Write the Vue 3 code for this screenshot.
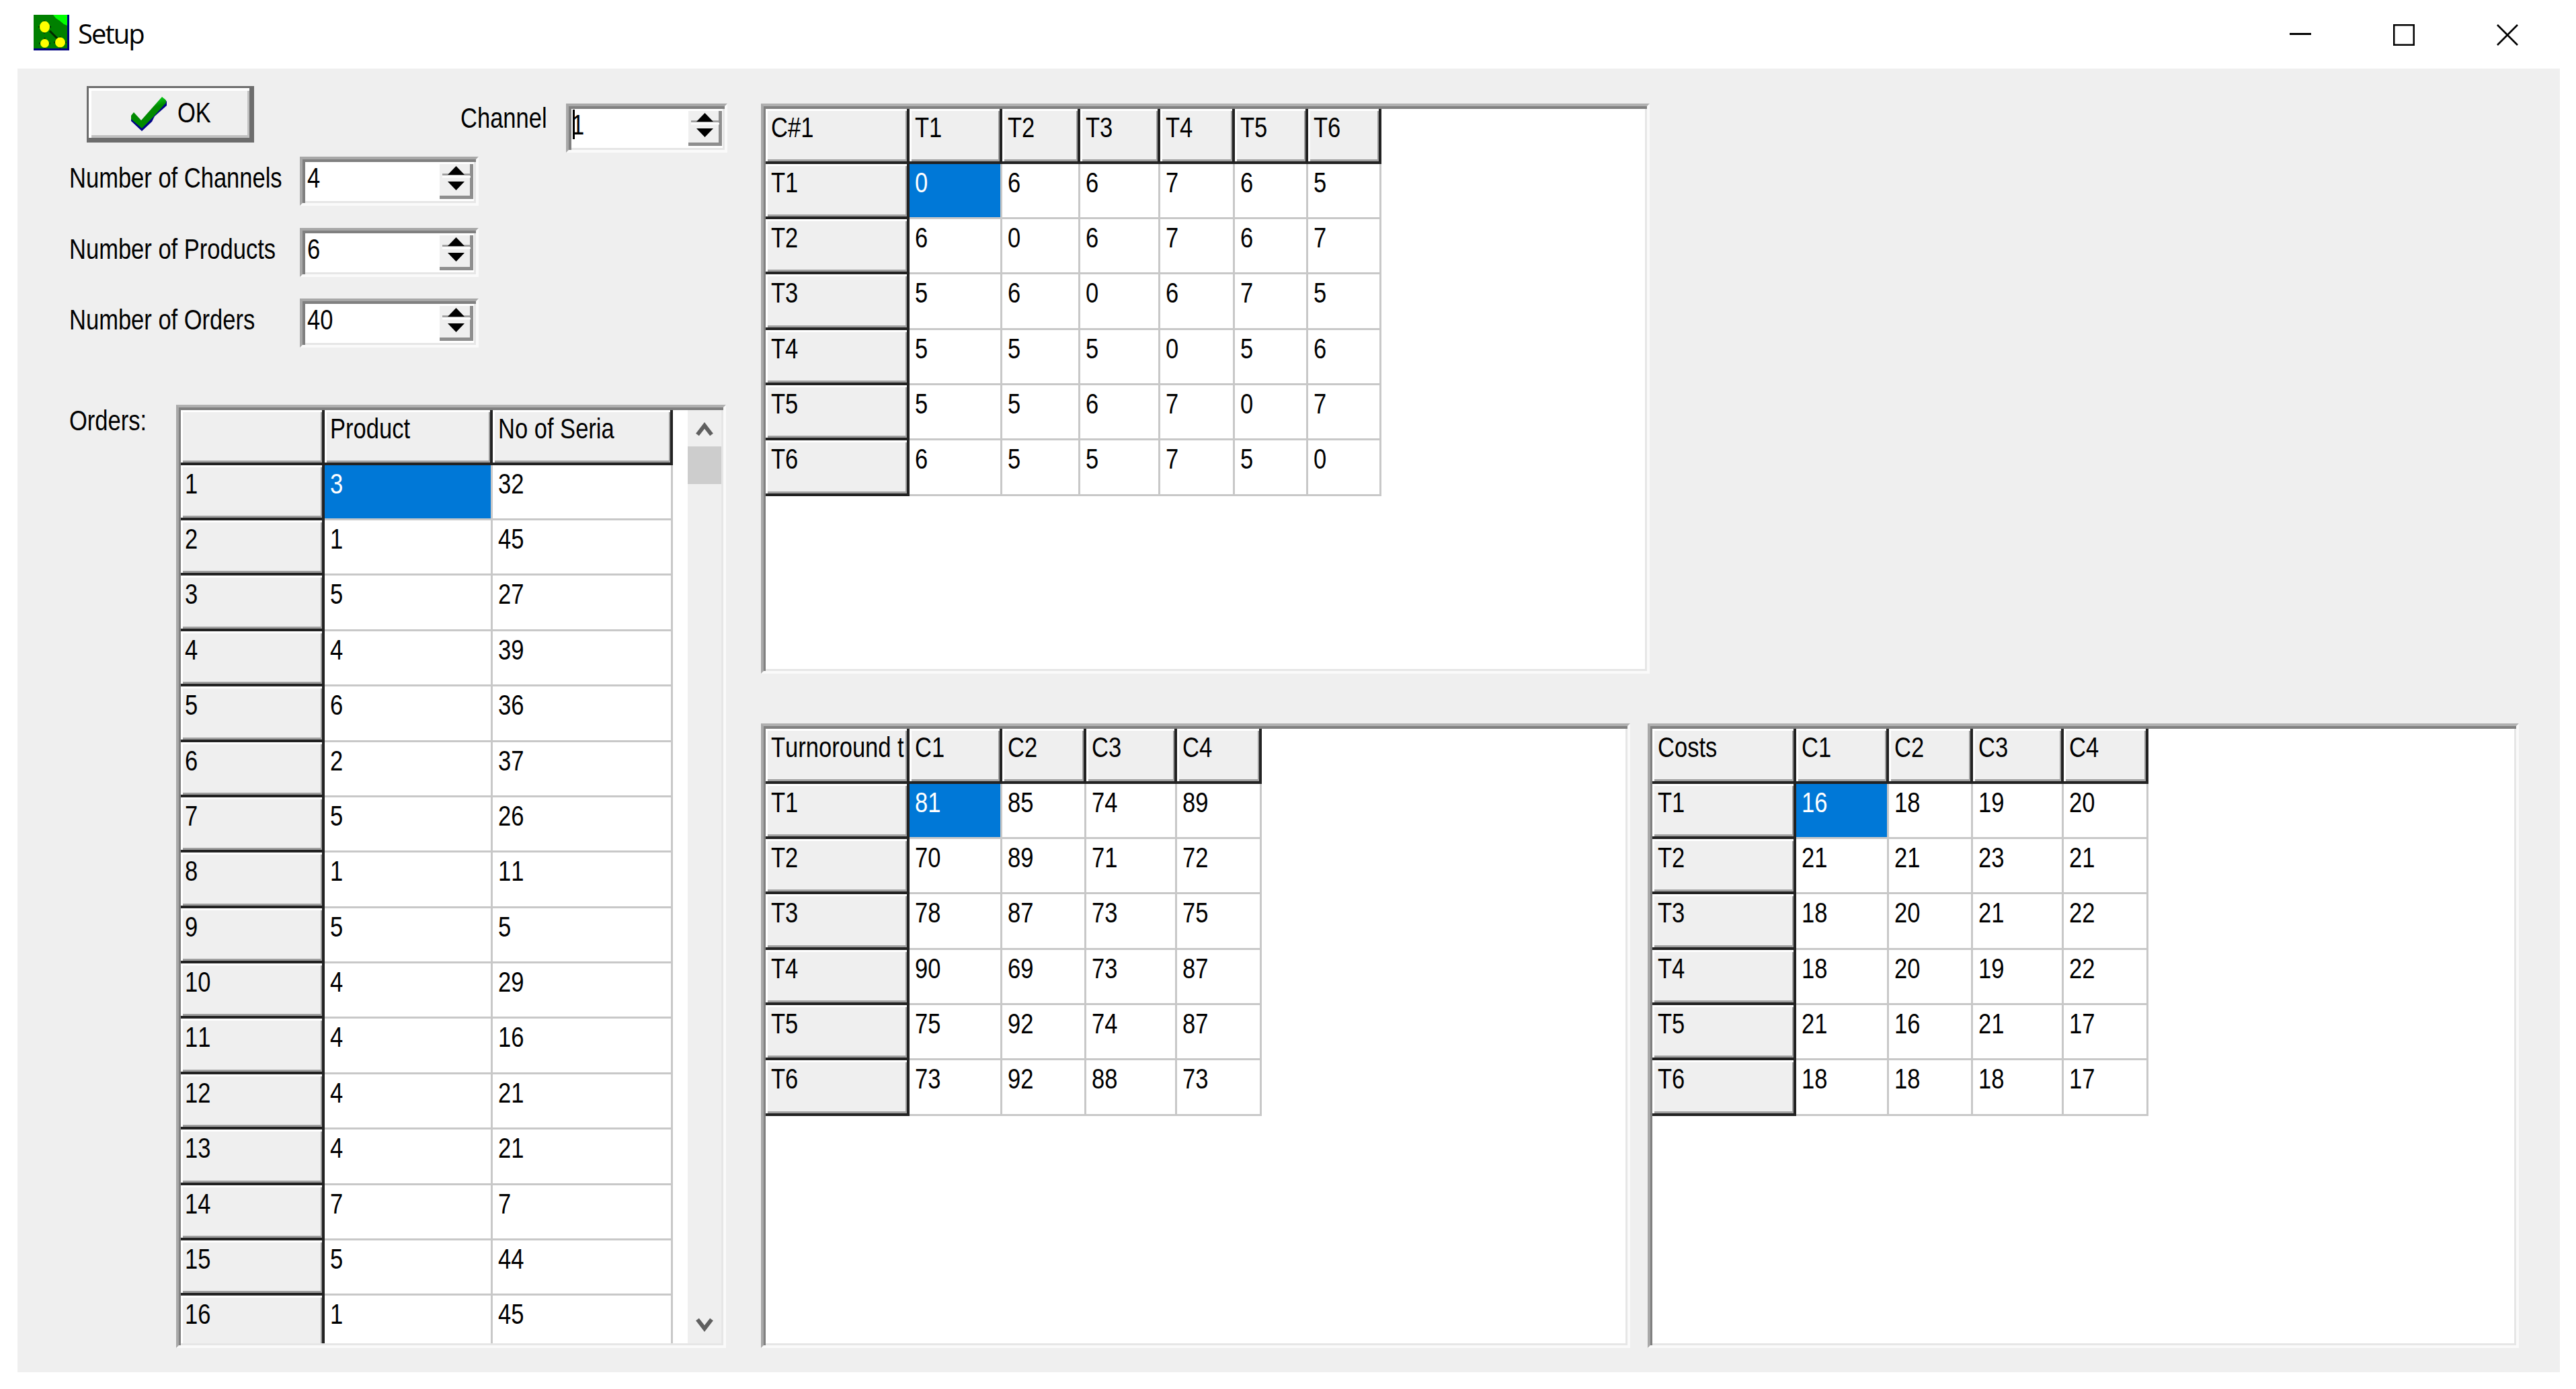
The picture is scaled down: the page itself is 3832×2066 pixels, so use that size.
<template>
  <div class="window">
    <header class="titlebar">
      <svg class="app-icon" viewBox="0 0 53 53">
        <rect width="53" height="53" fill="#000080" />
        <rect width="50" height="50" fill="#008000" />
        <path d="M29 0H50V16L45 14L39 9L33 5Z" fill="#00ff00" />
        <path d="M24 24L36 36" stroke="#002800" stroke-width="3" fill="none" />
        <path d="M16 8V28M7 18H26M16.500 34V50M8 42.500H25M39.500 32V50M30 41H49" stroke="#003c00" stroke-width="2.500" fill="none" />
        <ellipse cx="16.500" cy="18" rx="7.500" ry="8.500" fill="#ffff00" />
        <ellipse cx="16.500" cy="42.500" rx="6.500" ry="6.500" fill="#ffff00" />
        <ellipse cx="39.500" cy="41" rx="7.500" ry="7.500" fill="#ffff00" />
      </svg>
      <span class="title">Setup</span>
      <div class="window-buttons">
        <svg viewBox="0 0 32 32"><path d="M0 14.5H32" stroke="#000" stroke-width="3" /></svg>
        <svg viewBox="0 0 32 32"><rect x="1.25" y="1.25" width="29.5" height="29.5" fill="none" stroke="#000" stroke-width="2.5" /></svg>
        <svg viewBox="0 0 32 32"><path d="M1 1L31 31M31 1L1 31" stroke="#000" stroke-width="2.6" /></svg>
      </div>
    </header>

    <main class="client">
      <section class="left">
        <div class="top-row">
          <button class="ok">
            <svg class="check" viewBox="0 0 54 52">
              <defs>
                <linearGradient id="tick" x1="0" y1="0" x2="0.35" y2="1">
                  <stop offset="0.15" stop-color="#10f028" />
                  <stop offset="0.5" stop-color="#008a00" />
                </linearGradient>
              </defs>
              <path d="M1 31L1 36L17 51L32 37L36 29L54 13V6L17 43Z" fill="#000088" />
              <path d="M1 28L5 23L16 35L47 0L53 5V9L32 32L17 47L1 33Z" fill="url(#tick)" />
            </svg>
            <span class="text">OK</span>
          </button>
          <label class="channel-label"><span class="text">Channel</span></label>
          <div class="spin spin-channel">
            <span class="spin-value"><span class="text">{{ channel }}</span><i class="caret"></i></span>
            <span class="updown">
              <svg viewBox="0 0 42 46">
                <path d="M0 15.5H42" stroke="#969696" stroke-width="2.5" />
                <path d="M0 19H42" stroke="#fff" stroke-width="2.5" />
                <path d="M20.5 3L33 16H8ZM8 26H33L20.5 39Z" />
              </svg>
            </span>
          </div>
        </div>

        <div v-for="field in fields" :key="field.label" class="field">
          <label><span class="text">{{ field.label }}</span></label>
          <div class="spin">
            <span class="spin-value"><span class="text">{{ field.value }}</span></span>
            <span class="updown">
              <svg viewBox="0 0 42 46">
                <path d="M0 15.5H42" stroke="#969696" stroke-width="2.5" />
                <path d="M0 19H42" stroke="#fff" stroke-width="2.5" />
                <path d="M20.5 3L33 16H8ZM8 26H33L20.5 39Z" />
              </svg>
            </span>
          </div>
        </div>

        <div class="orders">
          <label><span class="text">Orders:</span></label>
          <div class="sunken orders-box">
            <div class="grid">
              <div v-for="(row, r) in orders" :key="r" class="row" :class="{ head: r === 0 }">
                <div
                  v-for="(cell, c) in row"
                  :key="c"
                  class="cell"
                  :class="{ fixed: r === 0 || c === 0, selected: r === 1 && c === 1 }"
                  :style="{ width: orderCols[c] + 'px' }"
                >
                  <span class="text">{{ cell }}</span>
                </div>
              </div>
            </div>
            <div class="scrollbar">
              <svg viewBox="0 0 26 22"><path d="M2.5 19.5L13 6L23.5 19.5" /></svg>
              <div class="thumb"></div>
              <svg viewBox="0 0 26 22"><path d="M2.5 2.5L13 16L23.5 2.5" /></svg>
            </div>
          </div>
        </div>
      </section>

      <section class="right">
        <div v-for="table in tables" :key="table.name" class="sunken" :class="table.name">
          <div class="grid">
            <div v-for="(row, r) in table.rows" :key="r" class="row" :class="{ head: r === 0 }">
              <div
                v-for="(cell, c) in row"
                :key="c"
                class="cell"
                :class="{ fixed: r === 0 || c === 0, selected: r === 1 && c === 1 }"
                :style="{ width: table.cols[c] + 'px' }"
              >
                <span class="text">{{ cell }}</span>
              </div>
            </div>
          </div>
        </div>
      </section>
    </main>
  </div>
</template>

<script setup>
import { ref } from 'vue'

const channel = ref(1)

const fields = ref([
  { label: 'Number of Channels', value: 4 },
  { label: 'Number of Products', value: 6 },
  { label: 'Number of Orders', value: 40 }
])

const orderCols = [214, 250, 268]

const orders = ref([
  ['', 'Product', 'No of Seria'],
  [1, 3, 32],
  [2, 1, 45],
  [3, 5, 27],
  [4, 4, 39],
  [5, 6, 36],
  [6, 2, 37],
  [7, 5, 26],
  [8, 1, 11],
  [9, 5, 5],
  [10, 4, 29],
  [11, 4, 16],
  [12, 4, 21],
  [13, 4, 21],
  [14, 7, 7],
  [15, 5, 44],
  [16, 1, 45]
])

const tables = ref([
  {
    name: 'changeover',
    cols: [214, 138, 116, 119, 111, 109, 109],
    rows: [
      ['C#1', 'T1', 'T2', 'T3', 'T4', 'T5', 'T6'],
      ['T1', 0, 6, 6, 7, 6, 5],
      ['T2', 6, 0, 6, 7, 6, 7],
      ['T3', 5, 6, 0, 6, 7, 5],
      ['T4', 5, 5, 5, 0, 5, 6],
      ['T5', 5, 5, 6, 7, 0, 7],
      ['T6', 6, 5, 5, 7, 5, 0]
    ]
  },
  {
    name: 'turnaround',
    cols: [214, 138, 125, 135, 126],
    rows: [
      ['Turnoround t', 'C1', 'C2', 'C3', 'C4'],
      ['T1', 81, 85, 74, 89],
      ['T2', 70, 89, 71, 72],
      ['T3', 78, 87, 73, 75],
      ['T4', 90, 69, 73, 87],
      ['T5', 75, 92, 74, 87],
      ['T6', 73, 92, 88, 73]
    ]
  },
  {
    name: 'costs',
    cols: [214, 138, 125, 135, 126],
    rows: [
      ['Costs', 'C1', 'C2', 'C3', 'C4'],
      ['T1', 16, 18, 19, 20],
      ['T2', 21, 21, 23, 21],
      ['T3', 18, 20, 21, 22],
      ['T4', 18, 20, 19, 22],
      ['T5', 21, 16, 21, 17],
      ['T6', 18, 18, 18, 17]
    ]
  }
])
</script>

<style>
body {
  margin: 0;
  background: #fff;
}
</style>

<style scoped>
.window {
  box-sizing: border-box;
  width: 3832px;
  height: 2066px;
  padding: 0 24px 25px 26px;
  background: #fff;
  overflow: hidden;
  font-family: "Liberation Sans", Arial, sans-serif;
  font-size: 42px;
  line-height: 48px;
  font-kerning: none;
  color: #000;
}

.window * {
  box-sizing: border-box;
}

/* narrow bitmap-like lettering */
.text {
  display: inline-block;
  white-space: nowrap;
  transform: scaleX(0.822);
  transform-origin: 0 0;
}

.titlebar {
  display: flex;
  align-items: flex-start;
  height: 102px;
  padding: 22px 62px 0 24px;
}

.app-icon {
  width: 53px;
  height: 53px;
}

.title {
  margin: 0 0 0 13px;
  font-family: "Open Sans", "Noto Sans", sans-serif;
  font-size: 40px;
  line-height: 56px;
  letter-spacing: -2px;
}

.window-buttons {
  display: flex;
  gap: 122px;
  margin: 14px 0 0 auto;
}

.window-buttons svg {
  width: 32px;
  height: 32px;
}

.client {
  display: flex;
  height: 1939px;
  background: #efefef;
}

.left {
  width: 1106px;
  flex: none;
}

.top-row {
  display: flex;
  align-items: flex-start;
  height: 131px;
  padding: 26px 0 0 103px;
}

.ok {
  display: flex;
  align-items: flex-start;
  width: 249px;
  height: 84px;
  padding: 13px 0 0 62px;
  border: solid #6d6d6d;
  border-width: 3px 7px 7px 3px;
  background: #efefef;
  box-shadow: inset 4px 4px 0 #fff, inset -3px -4px 0 #c0c0c0;
  font: inherit;
  color: #000;
}

.check {
  width: 54px;
  height: 52px;
  margin-right: 16px;
  flex: none;
}

.channel-label {
  width: 157px;
  margin: 24px 0 0 307px;
}

.spin {
  display: flex;
  justify-content: space-between;
  width: 266px;
  height: 73px;
  padding: 3px 1px 0 7px;
  border: solid;
  border-width: 4px;
  border-color: #a8a8a8 #fafafa #fafafa #a8a8a8;
  background: #fff;
  box-shadow: inset 4px 4px 0 #808080, inset -3px -3px 0 #e6e6e6;
}

.spin-channel {
  width: 240px;
  margin-top: 26px;
  padding-left: 4px;
}

.spin-value {
  position: relative;
  padding-top: 1px;
  width: 150px;
}

.caret {
  position: absolute;
  left: 2px;
  top: 2px;
  width: 3px;
  height: 44px;
  background: #000;
}

.updown {
  width: 50px;
  height: 52px;
  margin: 4px 3px 0 0;
  padding-left: 4px;
  border: solid #8e8e8e;
  border-width: 0 5px 5px 0;
  background: #efefef;
}

.updown svg {
  display: block;
  width: 42px;
  height: 46px;
}

.field {
  display: flex;
  height: 105.7px;
  padding-left: 77px;
}

.field label {
  width: 343px;
  padding-top: 8px;
}

.orders {
  display: flex;
  margin-top: 52px;
  padding-left: 77px;
}

.orders label {
  width: 159px;
}

.sunken {
  display: flex;
  border: solid;
  border-width: 4px;
  border-color: #b0b0b0 #fafafa #fafafa #a8a8a8;
  padding: 4px 3px 3px 3px;
  background: #fff;
  box-shadow: inset 3px 4px 0 #808080, inset -3px -3px 0 #e6e6e6;
}

.orders-box {
  width: 818px;
  height: 1403px;
  justify-content: space-between;
}

.grid {
  overflow: hidden;
}

.row {
  display: flex;
  height: 82.4px;
}

.row.head {
  height: 81.5px;
}

.cell {
  flex: none;
  padding: 4px 0 0 8px;
  overflow: hidden;
  border: solid #c8c8c8;
  border-width: 0 3px 3px 0;
}

.cell.fixed {
  background: #efefef;
  border: solid #222;
  border-width: 0 4px 4px 0;
  box-shadow: inset 3px 3px 0 #fff, inset -2px -3px 0 #a0a0a0;
}

.orders .cell:first-child {
  padding-left: 6px;
}

.cell.selected {
  background: #0078d7;
  color: #fff;
}

.scrollbar {
  display: flex;
  flex-direction: column;
  align-items: center;
  width: 50px;
  padding: 17px 0 16px;
  background: #efefef;
}

.scrollbar svg {
  width: 26px;
  height: 22px;
  fill: none;
  stroke: #606060;
  stroke-width: 6;
}

.scrollbar .thumb {
  width: 50px;
  height: 56px;
  margin: 15px 0 auto;
  background: #cdcdcd;
}

.right {
  display: flex;
  flex-wrap: wrap;
  align-content: flex-start;
  column-gap: 26px;
  row-gap: 74px;
  padding-top: 52px;
}

.changeover {
  width: 1322px;
  height: 848px;
  margin-right: 1000px;
}

.turnaround {
  width: 1293px;
  height: 929px;
}

.costs {
  width: 1296px;
  height: 929px;
}
</style>
